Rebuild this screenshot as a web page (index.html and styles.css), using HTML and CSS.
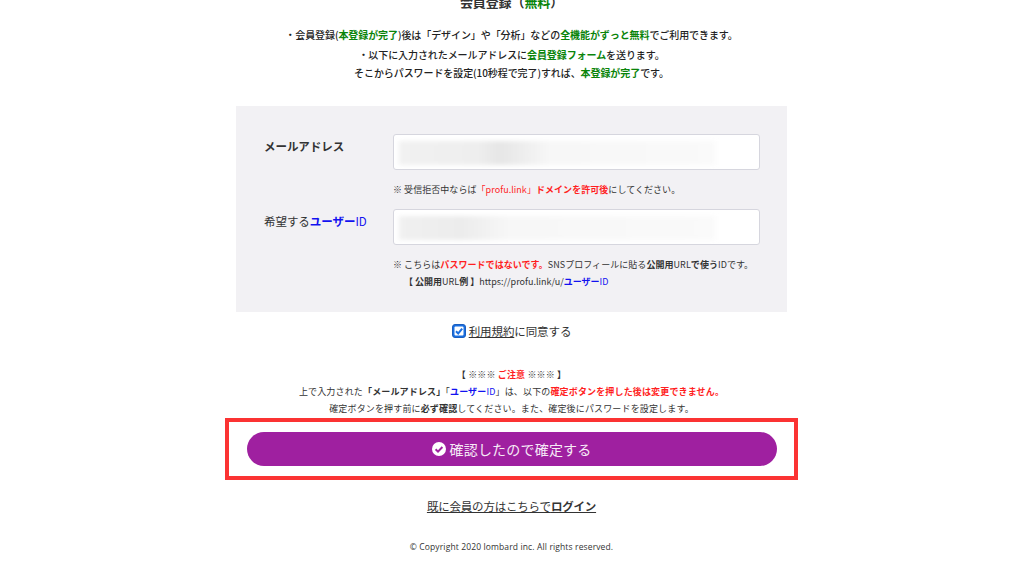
FILE: index.html
```html
<!DOCTYPE html>
<html lang="ja">
<head>
<meta charset="utf-8">
<title>会員登録</title>
<link rel="stylesheet" href="styles.css">
</head>
<body>
<main class="page">
  <h1 class="title">会員登録（<span class="green">無料</span>）</h1>
  <div class="intro">
    <p class="line-a">・会員登録(<b class="green">本登録が完了</b>)後は「デザイン」や「分析」などの<b class="green">全機能がずっと無料</b>でご利用できます。</p>
    <p class="line-b">・以下に入力されたメールアドレスに<b class="green">会員登録フォーム</b>を送ります。</p>
    <p class="line-c">そこからパスワードを設定(10秒程で完了)すれば、<b class="green">本登録が完了</b>です。</p>
  </div>
  <section class="panel">
    <div class="row">
      <label class="label"><b>メールアドレス</b></label>
      <div class="field">
        <div class="input"><div class="blur blur-mail"></div></div>
        <p class="note note-first">※ 受信拒否中ならば<span class="red">「profu.link」<b>ドメインを許可後</b></span>にしてください。</p>
      </div>
    </div>
    <div class="row row-second">
      <label class="label">希望する<b class="blue">ユーザー</b><span class="blue">ID</span></label>
      <div class="field">
        <div class="input"><div class="blur blur-id"></div></div>
        <p class="note note-second">※ こちらは<b class="red">パスワードではないです。</b>SNSプロフィールに貼る<b>公開用</b>URL<b>で使う</b>IDです。</p>
        <p class="note note-third"><b>【 公開用</b>URL<b>例 】</b>https://profu.link/u/<b class="blue">ユーザー</b><span class="blue">ID</span></p>
      </div>
    </div>
  </section>
  <div class="agree">
    <span class="check"><svg viewBox="0 0 14 14" width="14" height="14"><rect x="0.5" y="0.5" width="13" height="13" rx="2.5" fill="#1a6fe0" stroke="#1a5fc0"/><rect x="2.5" y="2.5" width="9" height="9" rx="1" fill="#fff"/><path d="M4 7.2l2.2 2.2L10.2 4.6" fill="none" stroke="#1a6fe0" stroke-width="2"/></svg></span>
    <span><u>利用規約</u>に同意する</span>
  </div>
  <div class="caution">
    <p class="caution-a"><b>【</b> ※※※ <b class="red">ご注意</b> ※※※ <b>】</b></p>
    <p class="caution-b">上で入力された<b>「メールアドレス」</b>「<b class="blue">ユーザー</b><span class="blue">ID</span>」は、以下の<b class="red">確定ボタンを押した後は変更できません。</b></p>
    <p class="caution-c">確定ボタンを押す前に<b>必ず確認</b>してください。また、確定後にパスワードを設定します。</p>
  </div>
  <div class="highlight">
    <button class="submit" type="button">
      <svg class="submit-icon" viewBox="0 0 14 14" width="14" height="14"><circle cx="7" cy="7" r="7" fill="#fff"/><path d="M3.6 7.2l2.4 2.4 4.4-4.6" fill="none" stroke="#9f20a0" stroke-width="2"/></svg>
      <span>確認したので確定する</span>
    </button>
  </div>
  <p class="login"><u>既に会員の方はこちらで<b>ログイン</b></u></p>
  <p class="copy">© Copyright 2020 lombard inc. All rights reserved.</p>
</main>
</body>
</html>
```
FILE: styles.css
```css
* { box-sizing: border-box; }
html, body { margin: 0; padding: 0; height: 561px; overflow: hidden; background: #fff; }
body { font-family: "Noto Sans CJK JP", "Noto Sans", sans-serif; color: #333; }
p, h1 { margin: 0; }
b { font-weight: 700; }
.page { width: 573px; margin: -9px 0 0 225px; display: flex; flex-direction: column; align-items: center; }
.green { color: #0a840a; }
.red { color: #ff1f1f; }
.blue { color: #1212f0; }
.title { font-size: 13px; line-height: 22px; height: 22px; font-weight: 700; color: #333; letter-spacing: -.1px; }
.intro { margin-top: 13px; width: 100%; text-align: center; font-size: 10px; color: #222; letter-spacing: -.08px; font-weight: 500; }
.intro p { line-height: 18px; height: 18px; }
.line-b { margin-top: 2px; }
.panel { width: 551px; height: 206px; margin-top: 24px; background: #f2f1f4; padding: 28px 27px 0 28px; display: flex; flex-direction: column; }
.row { display: flex; }
.row-second { margin-top: 11px; }
.label { width: 129px; font-size: 11.5px; line-height: 24px; color: #333; letter-spacing: -.05px; }
.field { width: 367px; }
.input { height: 36px; background: #fff; border: 1px solid #d6d6de; border-radius: 3px; padding: 6px 44px 6px 5px; overflow: hidden; }
.blur { height: 24px; filter: blur(2px); }
.blur-mail { background: linear-gradient(90deg, #f1f1f1 0%, #eeeeee 25%, #e6e6e6 32%, #f7f7f7 48%, #fafafa 100%); }
.blur-id { background: linear-gradient(90deg, #f0f0f0 0%, #ececec 20%, #f7f7f7 35%, #fafafa 100%); }
.note { font-size: 9px; line-height: 16px; color: #333; letter-spacing: .05px; white-space: nowrap; }
.note-first { margin-top: 12px; }
.note-second { margin-top: 12px; }
.note-third { margin-top: 1px; padding-left: 11px; letter-spacing: 0; }
.agree { margin-top: 9px; height: 20px; display: flex; align-items: center; gap: 3px; font-size: 11.5px; letter-spacing: -.1px; color: #333; }
.check { display: flex; }
.caution { margin-top: 25px; width: 100%; text-align: center; font-size: 9px; color: #333; letter-spacing: .15px; }
.caution p { line-height: 17px; height: 17px; }
.highlight { margin-top: 1px; width: 573px; height: 62px; border: 4px solid #fb3333; display: flex; align-items: center; justify-content: center; }
.submit { width: 530px; height: 34px; border: none; border-radius: 17px; background: #9f20a0; color: #f6eaf6; font-family: inherit; font-size: 14px; letter-spacing: .2px; display: flex; align-items: center; justify-content: center; gap: 4px; padding: 0; }
.submit-icon { flex: none; }
.login { margin-top: 16px; font-size: 11.5px; line-height: 20px; color: #333; letter-spacing: -.2px; }
.copy { margin-top: 24px; font-family: "Open Sans", sans-serif; font-size: 8.5px; line-height: 14px; color: #333; letter-spacing: .13px; }
```
